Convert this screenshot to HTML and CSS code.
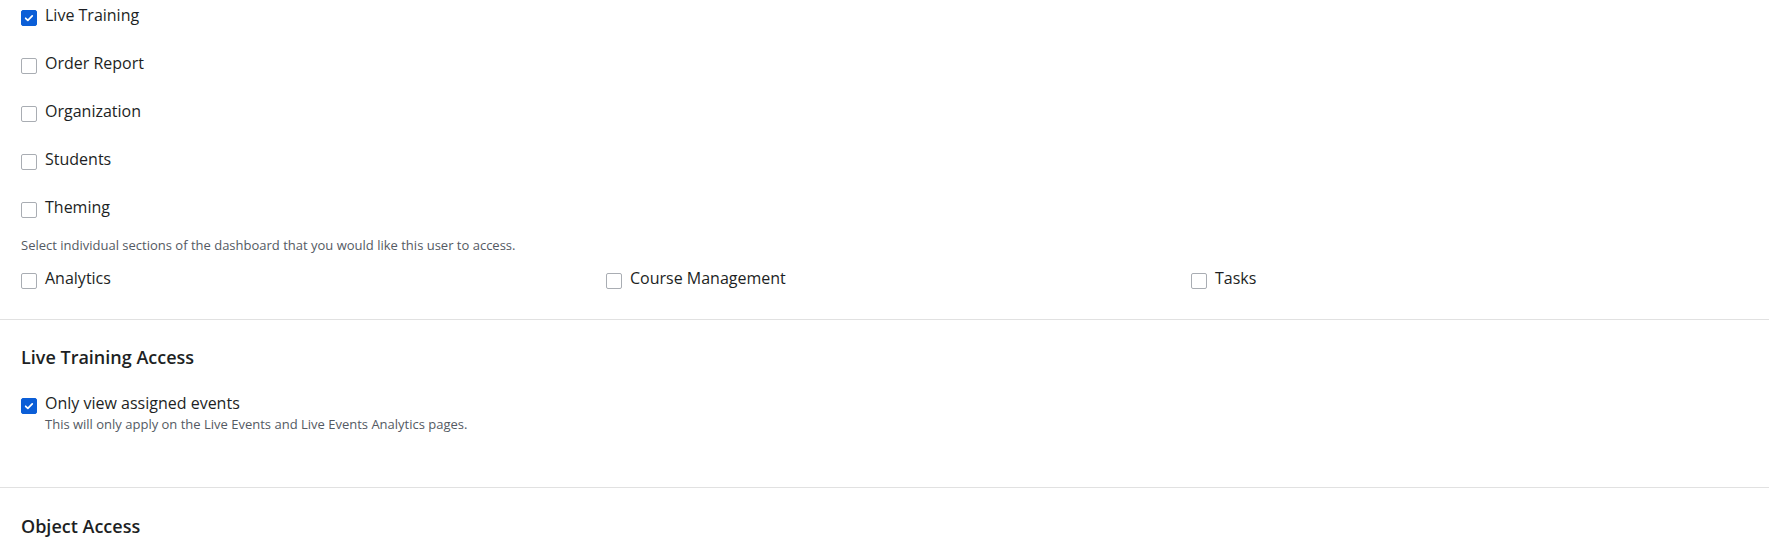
FILE: index.html
```html
<!DOCTYPE html>
<html>
<head>
<meta charset="utf-8">
<link rel="stylesheet" href="styles.css">
</head>
<body>
<div class="section top">
  <ul class="list">
    <li class="opt"><span class="box checked"><svg viewBox="0 0 16 16"><path d="M4.2 8.3l2.5 2.4 5-5" /></svg></span><span class="lbl">Live Training</span></li>
    <li class="opt"><span class="box"></span><span class="lbl">Order Report</span></li>
    <li class="opt"><span class="box"></span><span class="lbl">Organization</span></li>
    <li class="opt"><span class="box"></span><span class="lbl">Students</span></li>
    <li class="opt"><span class="box"></span><span class="lbl">Theming</span></li>
  </ul>
  <p class="help">Select individual sections of the dashboard that you would like this user to access.</p>
  <div class="grid">
    <div class="opt"><span class="box"></span><span class="lbl">Analytics</span></div>
    <div class="opt"><span class="box"></span><span class="lbl">Course Management</span></div>
    <div class="opt"><span class="box"></span><span class="lbl">Tasks</span></div>
  </div>
</div>
<div class="section mid">
  <h2 class="title">Live Training Access</h2>
  <div class="opt"><span class="box checked"><svg viewBox="0 0 16 16"><path d="M4.2 8.3l2.5 2.4 5-5" /></svg></span>
    <div class="txt"><span class="lbl">Only view assigned events</span><span class="sub">This will only apply on the Live Events and Live Events Analytics pages.</span></div>
  </div>
</div>
<div class="section last">
  <h2 class="title">Object Access</h2>
</div>
</body>
</html>
```
FILE: styles.css
```css
html, body { margin: 0; padding: 0; background: #fff; }
body { font-family: "Open Sans", "Noto Sans", sans-serif; color: #1d1f24; width: 1769px; overflow: hidden; }
.section { padding: 0 21px; border-bottom: 1px solid #e1e1e1; }
.top { padding-top: 3px; padding-bottom: 29px; }
.list { list-style: none; margin: 0; padding: 0; display: flex; flex-direction: column; gap: 24px; }
.opt { display: flex; align-items: flex-start; }
.box { width: 14px; height: 14px; border: 1px solid #a9adb3; border-radius: 2px; margin-top: 7px; margin-right: 8px; flex: none; background: #fff; box-sizing: content-box; }
.box.checked { background: #0b5ed7; border-color: #0b5ed7; }
.box svg { width: 14px; height: 14px; display: block; }
.box path { fill: none; stroke: #fff; stroke-width: 2; stroke-linecap: round; stroke-linejoin: round; }
.lbl { font-size: 16px; line-height: 24px; }
.help { margin: 16px 0 11px; font-size: 13px; line-height: 20px; color: #545a63; }
.grid { display: grid; grid-template-columns: repeat(3, 585px); }
.mid { padding-top: 25px; padding-bottom: 54px; }
.title { margin: 0 0 22px; font-size: 18px; line-height: 24px; font-weight: 600; color: #1d1f24; }
.txt { display: flex; flex-direction: column; }
.sub { font-size: 13px; line-height: 18px; color: #545a63; }
.last { border-bottom: none; padding-top: 26px; }
```
